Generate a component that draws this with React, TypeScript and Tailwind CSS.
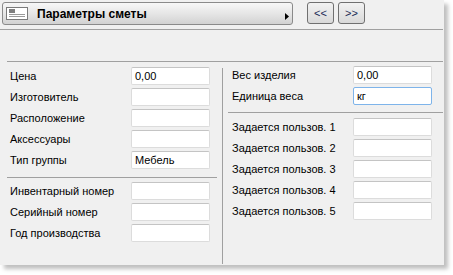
import React from "react";

const font = { fontFamily: '"Liberation Sans", Arial, sans-serif' };

function Field({ value = "", focused = false }: { value?: string; focused?: boolean }) {
  return (
    <div
      className={
        "h-[18px] w-[79px] rounded-[2px] border bg-white px-[3px] text-[11px] leading-[16px] text-black " +
        (focused ? "border-[#7eb4ea]" : "border-[#dcdcdc] border-t-[#c4c4c4]")
      }
    >
      {value}
    </div>
  );
}

function Row({ label, value, focused }: { label: string; value?: string; focused?: boolean }) {
  return (
    <div className="flex h-[18px] items-center">
      <span className="w-[121px] text-[11px] text-black">{label}</span>
      <Field value={value} focused={focused} />
    </div>
  );
}

function ListIcon() {
  return (
    <svg width="22" height="13" viewBox="0 0 22 13" className="shrink-0">
      <rect x="0.5" y="0.5" width="21" height="12" fill="#fff" stroke="#7a7a7a" />
      <line x1="3" y1="3" x2="9" y2="3" stroke="#000" />
      <line x1="3" y1="5" x2="9" y2="5" stroke="#000" />
      <line x1="3" y1="7.5" x2="19" y2="7.5" stroke="#9a9a9a" />
      <line x1="3" y1="9.5" x2="19" y2="9.5" stroke="#9a9a9a" />
    </svg>
  );
}

function NavButton({ label }: { label: string }) {
  return (
    <button className="flex h-[22px] w-[27px] items-center justify-center rounded-[3px] border border-[#707070] bg-gradient-to-b from-[#f2f2f2] to-[#d9d9d9] text-[11px] text-[#1a2a55]">
      {label}
    </button>
  );
}

export default function App() {
  return (
    <div className="min-h-screen bg-white" style={font}>
      <div className="h-[265px] w-[444px] bg-[#f0f0f0] shadow-[4px_4px_4px_rgba(0,0,0,0.25)]">
        {/* Header */}
        <div className="flex h-[29px] items-start pl-[2px] pt-[2px]">
          <div className="flex h-[23px] w-[291px] items-center rounded-[3px] border border-[#8a8a8a] bg-gradient-to-b from-[#f7f7f7] via-[#e6e6e6] to-[#d2d2d2] pl-[3px] pr-[3px]">
            <ListIcon />
            <span className="ml-[9px] flex-1 text-[12px] font-bold text-black">Параметры сметы</span>
            <svg width="4" height="7" viewBox="0 0 4 7" className="mt-[6px]">
              <path d="M0 0 L4 3.5 L0 7 Z" fill="#000" />
            </svg>
          </div>
          <div className="ml-[14px] flex gap-[4px]">
            <NavButton label="<<" />
            <NavButton label=">>" />
          </div>
        </div>
        <div className="h-px w-[443px] bg-[#a0a0a0]" />
        <div className="h-[31px]" />
        <div className="ml-[7px] h-px w-[436px] bg-[#a0a0a0]" />

        {/* Body */}
        <div className="flex">
          <div className="ml-[7px] w-[210px] pt-[5px]">
            <div className="flex flex-col gap-[3px] pl-[3px]">
              <Row label="Цена" value="0,00" />
              <Row label="Изготовитель" />
              <Row label="Расположение" />
              <Row label="Аксессуары" />
              <Row label="Тип группы" value="Мебель" />
            </div>
            <div className="mt-[8px] h-px w-[210px] bg-[#a0a0a0]" />
            <div className="mt-[4px] flex flex-col gap-[3px] pl-[3px]">
              <Row label="Инвентарный номер" />
              <Row label="Серийный номер" />
              <Row label="Год производства" />
            </div>
          </div>
          <div className="ml-[5px] mt-[6px] h-[196px] w-px bg-[#a0a0a0]" />
          <div className="ml-[5px] w-[215px] pt-[4px]">
            <div className="flex flex-col gap-[3px] pl-[4px]">
              <Row label="Вес изделия" value="0,00" />
              <Row label="Единица веса" value="кг" focused />
            </div>
            <div className="mt-[7px] h-px w-[215px] bg-[#a0a0a0]" />
            <div className="mt-[5px] flex flex-col gap-[3px] pl-[4px]">
              <Row label="Задается пользов. 1" />
              <Row label="Задается пользов. 2" />
              <Row label="Задается пользов. 3" />
              <Row label="Задается пользов. 4" />
              <Row label="Задается пользов. 5" />
            </div>
          </div>
        </div>
      </div>
    </div>
  );
}
